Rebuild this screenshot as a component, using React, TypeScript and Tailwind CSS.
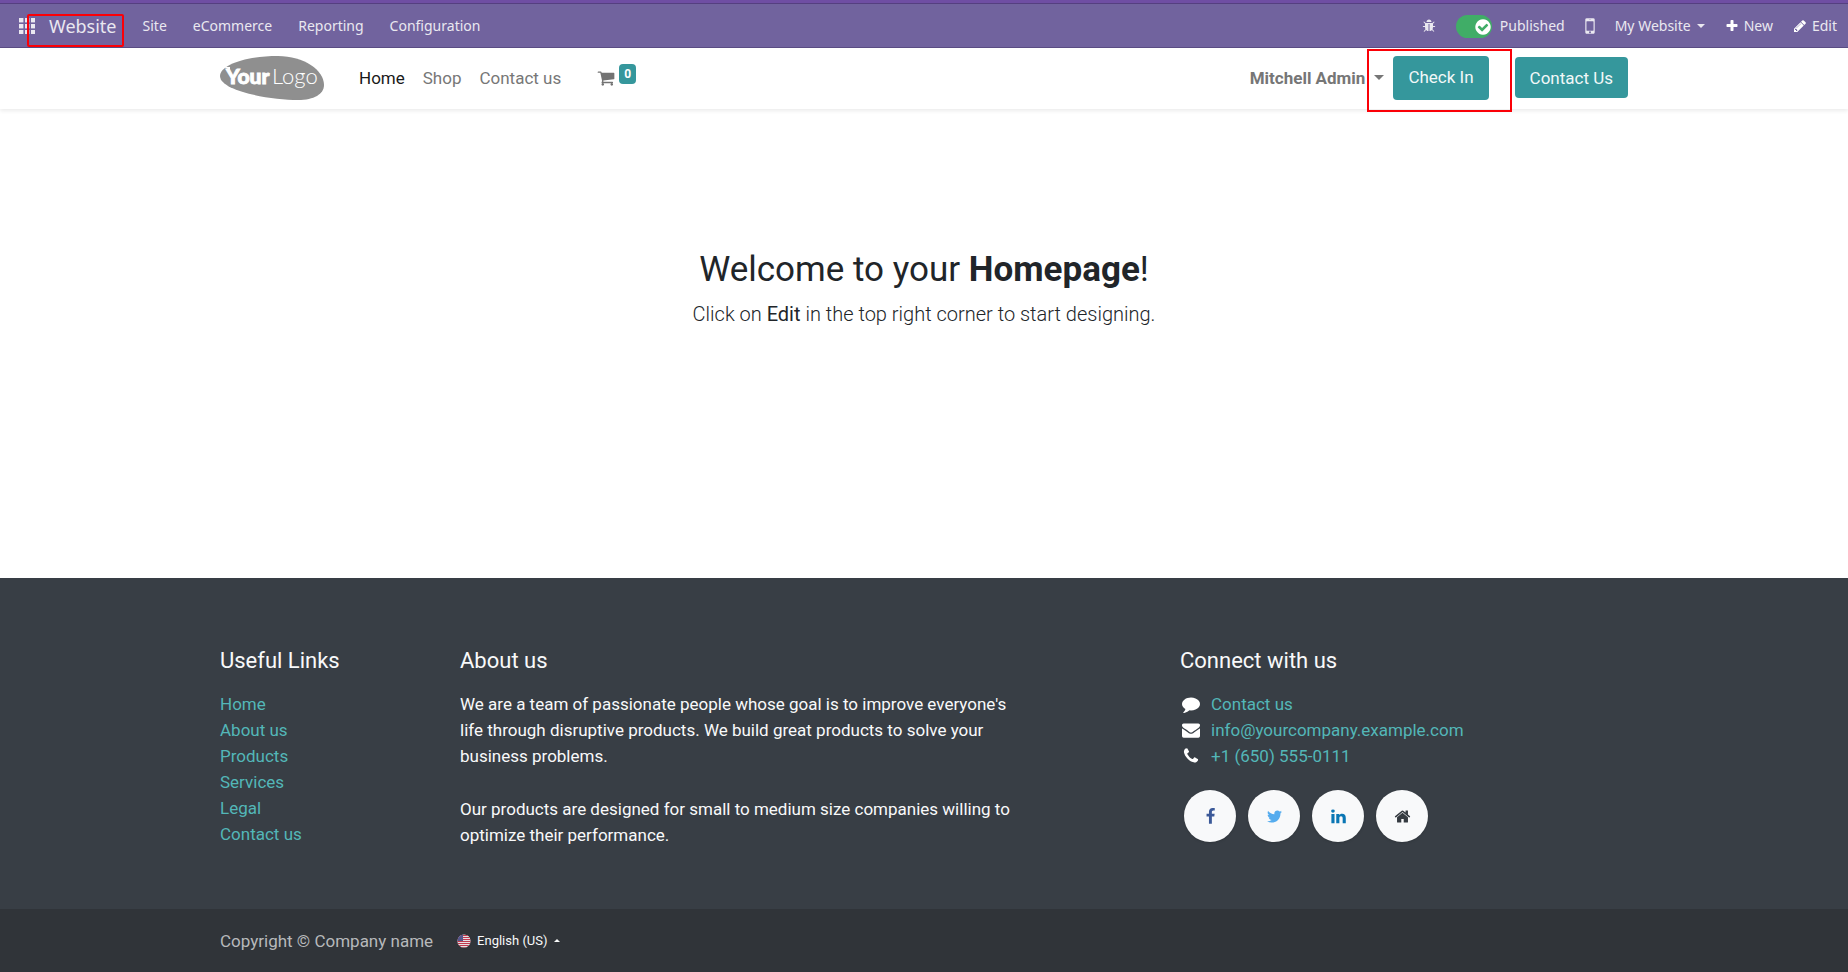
import React from "react";

const ICONS = {
  bug: "M1696 960q0 26-19 45t-45 19h-224q0 171-67 290l208 209q19 19 19 45t-19 45q-18 19-45 19t-45-19l-198-197q-5 5-15 13t-42 28.5-65 36.5-82 29-97 13v-896h-128v896q-51 0-101.5-13.5t-87-33-66-39-43.5-32.5l-15-14-183 207q-20 21-48 21-24 0-43-16-19-18-20.5-44.5t15.5-46.5l202-227q-58-114-58-274h-224q-26 0-45-19t-19-45 19-45 45-19h224v-294l-173-173q-19-19-19-45t19-45 45-19 45 19l173 173h844l173-173q19-19 45-19t45 19 19 45-19 45l-173 173v294h224q26 0 45 19t19 45zm-480-576h-640q0-133 93.5-226.5t226.5-93.5 226.5 93.5 93.5 226.5z",
  check: "M1412 734q0-28-18-46l-91-90q-19-19-45-19t-45 19l-408 407-226-226q-19-19-45-19t-45 19l-91 90q-18 18-18 46 0 27 18 45l362 362q19 19 45 19 27 0 46-19l543-543q18-18 18-45zm252 162q0 209-103 385.5t-279.5 279.5-385.5 103-385.5-103-279.5-279.5-103-385.5 103-385.5 279.5-279.5 385.5-103 385.5 103 279.5 279.5 103 385.5z",
  mobile: "M976 1408q0-33-23.5-56.5t-56.5-23.5-56.5 23.5-23.5 56.5 23.5 56.5 56.5 23.5 56.5-23.5 23.5-56.5zm208-160v-704q0-13-9.5-22.5t-22.5-9.5h-512q-13 0-22.5 9.5t-9.5 22.5v704q0 13 9.5 22.5t22.5 9.5h512q13 0 22.5-9.5t9.5-22.5zm-192-848q0-16-16-16h-160q-16 0-16 16t16 16h160q16 0 16-16zm288-16v1024q0 52-38 90t-90 38h-512q-52 0-90-38t-38-90v-1024q0-52 38-90t90-38h512q52 0 90 38t38 90z",
  plus: "M1600 736v192q0 40-28 68t-68 28h-416v416q0 40-28 68t-68 28h-192q-40 0-68-28t-28-68v-416h-416q-40 0-68-28t-28-68v-192q0-40 28-68t68-28h416v-416q0-40 28-68t68-28h192q40 0 68 28t28 68v416h416q40 0 68 28t28 68z",
  pencil: "M491 1536l91-91-235-235-91 91v107h128v128h107zm523-928q0-22-22-22-10 0-17 7l-542 542q-7 7-7 17 0 22 22 22 10 0 17-7l542-542q7-7 7-17zm-54-192l416 416-832 832h-416v-416zm683 96q0 53-37 90l-166 166-416-416 166-165q36-38 90-38 53 0 91 38l235 234q37 39 37 91z",
  cart: "M704 1536q0 52-38 90t-90 38-90-38-38-90 38-90 90-38 90 38 38 90zm896 0q0 52-38 90t-90 38-90-38-38-90 38-90 90-38 90 38 38 90zm128-1088v512q0 24-16.5 42.5t-40.5 21.5l-1044 122q13 60 13 70 0 16-24 64h920q26 0 45 19t19 45-19 45-45 19h-1024q-26 0-45-19t-19-45q0-11 8-31.5t16-36 21.5-40 15.5-29.5l-177-823h-204q-26 0-45-19t-19-45 19-45 45-19h256q16 0 28.5 6.5t19.5 15.5 13 24.5 8 26 5.5 29.5 4.5 26h1201q26 0 45 19t19 45z",
  comment: "M1792 896q0 174-120 321.5t-326 233-450 85.5q-70 0-145-8-198 175-460 242-49 14-114 22-17 2-30.5-9t-17.5-29v-1q-3-4-.5-12t2-10 4.5-9.5l6-9 7-8.5 8-9q7-8 31-34.5t34.5-38 31-39.5 32.5-51 27-59 26-76q-157-89-247.5-220t-90.5-281q0-130 71-248.5t191-204.5 286-136.5 348-50.5q244 0 450 85.5t326 233 120 321.5z",
  envelope: "M1792 710v794q0 66-47 113t-113 47h-1472q-66 0-113-47t-47-113v-794q44 49 101 87 362 246 497 345 57 42 92.5 65.5t94.5 48 110 24.5h2q51 0 110-24.5t94.5-48 92.5-65.5q170-123 498-345 57-39 100-87zm0-294q0 79-49 151t-122 123q-376 261-468 325-10 7-42.5 31t-54 38.5-52 32.5-57.5 27-50 9h-2q-23 0-50-9t-57.5-27-52-32.5-54-38.5-42.5-31q-91-64-262-182.5t-205-142.5q-62-42-117-115.5t-55-136.5q0-78 41.5-130t118.5-52h1472q65 0 112.5 47t47.5 113z",
  phone: "M1600 1240q0 27-10 70.5t-21 68.5q-21 50-122 106-94 51-186 51-27 0-53-3.5t-57.5-12.5-47-14.5-55.5-20.5-49-18q-98-35-175-83-127-79-264-216t-216-264q-48-77-83-175-3-9-18-49t-20.5-55.5-14.5-47-12.5-57.5-3.5-53q0-92 51-186 56-101 106-122 25-11 68.5-21t70.5-10q14 0 21 3 18 6 53 76 11 19 30 54t35 63.5 31 53.5q3 4 17.5 25t21.5 35.5 7 28.5q0 20-28.5 50t-62 55-62 53-28.5 46q0 9 5 22.5t8.5 20.5 14 24 11.5 19q76 137 174 235t235 174q2 1 19 11.5t24 14 20.5 8.5 22.5 5q18 0 46-28.5t53-62 55-62 50-28.5q14 0 28.5 7t35.5 21.5 25 17.5q25 15 53.5 31t63.5 35 54 30q70 35 76 53 3 7 3 21z",
  facebook: "M1343 12v264h-157q-86 0-116 36t-30 108v189h293l-39 296h-254v759h-306v-759h-255v-296h255v-218q0-186 104-288.5t277-102.5q147 0 228 12z",
  twitter: "M1684 408q-67 98-162 167 1 14 1 42 0 130-38 259.5t-115.5 248.5-184.5 210.5-258 146-323 54.5q-271 0-496-145 35 4 78 4 225 0 401-138-105-2-188-64.5t-114-159.5q33 5 61 5 43 0 85-11-112-23-185.5-111.5t-73.5-205.5v-4q68 38 146 41-66-44-105-115t-39-154q0-88 44-163 121 149 294.5 238.5t371.5 99.5q-8-38-8-74 0-134 94.5-228.5t228.5-94.5q140 0 236 102 109-21 205-78-37 115-142 178 93-10 186-50z",
  linkedin: "M477 625v991h-330v-991h330zm21-306q1 73-50.5 122t-135.5 49h-2q-82 0-132-49t-50-122q0-74 51.5-122.5t134.5-48.5 133 48.5 51 122.5zm1166 729v568h-329v-530q0-105-40.5-164.5t-126.5-59.5q-63 0-105.5 34.5t-63.5 85.5q-11 30-11 81v553h-329q2-399 2-647t-1-296l-1-48h329v144h-2q20-32 41-56t56.5-52 87-43.5 114.5-15.5q171 0 275 113.5t104 332.5z",
  home: "M1472 992v480q0 26-19 45t-45 19h-384v-384h-256v384h-384q-26 0-45-19t-19-45v-480q0-1 .5-3t.5-3l575-474 575 474q1 2 1 6zm223-69l-62 74q-8 9-21 11h-3q-13 0-21-7l-692-577-692 577q-12 8-24 7-13-2-21-11l-62-74q-8-10-7-23.5t11-21.5l719-599q32-26 76-26t76 26l244 204v-195q0-14 9-23t23-9h192q14 0 23 9t9 23v408l219 182q10 8 11 21.5t-7 23.5z",
};

function Icon({ name, className }: { name: keyof typeof ICONS; className: string }) {
  return (
    <svg viewBox="0 0 1792 1792" className={`shrink-0 fill-current ${className}`} aria-hidden="true">
      <path d={ICONS[name]} />
    </svg>
  );
}

function Caret({ up = false, className }: { up?: boolean; className: string }) {
  return (
    <svg viewBox="0 0 10 5" className={`shrink-0 fill-current ${className}`} aria-hidden="true">
      <path d={up ? "M0 5h10L5 0z" : "M0 0h10L5 5z"} />
    </svg>
  );
}

function Logo() {
  return (
    <svg viewBox="0 0 104 44" className="h-11 w-[104px]" role="img" aria-label="Your Logo">
      <path fill="#8f8f8f" d="M0 20C0 9 26 0 58 0c26 0 46 14 46 29 0 9-10 15-26 15C50 44 0 35 0 20z" />
      <path fill="#fff" d="M4 11h6v3z" />
      <text x="6" y="28" fill="#fff" stroke="#fff" strokeWidth="0.9" fontFamily="Lato, sans-serif" fontWeight="900" fontSize="21">Your</text>
      <text x="52" y="28" fill="#fff" fontFamily="Lato, sans-serif" fontWeight="300" fontSize="22">Logo</text>
    </svg>
  );
}

function Flag() {
  return (
    <svg viewBox="0 0 14 14" className="size-[14px]" aria-hidden="true">
      <defs>
        <clipPath id="flag-round"><circle cx="7" cy="7" r="6.6" /></clipPath>
      </defs>
      <g clipPath="url(#flag-round)">
        <rect width="14" height="14" fill="#e8dfe4" />
        {[1, 3, 5, 7, 9, 11, 13].map((y) => (
          <rect key={y} y={y} width="14" height="1" fill="#c0394e" />
        ))}
        <rect width="6" height="7" fill="#55578c" />
      </g>
    </svg>
  );
}

const menus = ["Site", "eCommerce", "Reporting", "Configuration"];
const usefulLinks = ["Home", "About us", "Products", "Services", "Legal", "Contact us"];

export default function App() {
  return (
    <div className="flex min-h-screen flex-col bg-white font-['Roboto',sans-serif] text-[17px] leading-[26px] text-[#212529]">
      <nav className="flex h-12 items-center justify-between border-t-3 border-b border-t-[#6f4ea3] border-b-[#5b4d85] bg-[#71639e] pt-0.5 pr-[11px] pl-[19px] font-['Noto_Sans',sans-serif] text-[14px] text-[#eae8f0] shadow-[inset_0_1px_0_#553f80]">
        <div className="flex items-center gap-[26px]">
          <div className="relative flex items-center gap-[14px]">
            <button type="button" aria-label="Apps">
              <svg viewBox="0 0 16 16" className="size-4 fill-current" aria-hidden="true">
                {[0, 6, 12].map((y) => [0, 6, 12].map((x) => <rect key={`${x}-${y}`} x={x} y={y} width="4.4" height="4.4" />))}
              </svg>
            </button>
            <a href="#website" className="text-[18px]">Website</a>
            <span className="pointer-events-none absolute top-px -right-[7px] -bottom-2 left-2 rounded-xs border-2 border-[#fb0007]" />
          </div>
          {menus.map((m) => (
            <button key={m} type="button">{m}</button>
          ))}
        </div>
        <div className="flex items-center gap-5">
          <button type="button" aria-label="Debug"><Icon name="bug" className="size-[14px]" /></button>
          <label className="flex items-center gap-2">
            <span className="relative flex">
              <input type="checkbox" defaultChecked className="h-[23px] w-9 appearance-none rounded-full bg-[#40ad67]" />
              <Icon name="check" className="pointer-events-none absolute top-[3px] right-0 size-[18px] text-white" />
            </span>
            Published
          </label>
          <button type="button" aria-label="Mobile preview" className="w-[10px]"><Icon name="mobile" className="-mx-[6px] size-[22px]" /></button>
          <button type="button" className="flex items-center gap-[6px]">My Website <Caret className="h-1 w-2" /></button>
          <button type="button" className="flex items-center gap-[5px]"><Icon name="plus" className="size-[14px] text-white" /> New</button>
          <button type="button" className="flex items-center gap-[5px]"><Icon name="pencil" className="size-[14px] text-white" /> Edit</button>
        </div>
      </nav>

      <header className="bg-white shadow-[0_2px_4px_rgba(0,0,0,0.08)]">
        <div className="mx-auto flex h-[61px] max-w-[1440px] items-center justify-between px-4 pb-0.5">
          <div className="flex items-center">
            <a href="#home"><Logo /></a>
            <nav className="ml-[35px] flex items-center gap-[18px] text-[#777]">
              <a href="#home" className="text-[#191919]">Home</a>
              <a href="#shop">Shop</a>
              <a href="#contact">Contact us</a>
            </nav>
            <a href="#cart" aria-label="Cart" className="ml-9 flex items-center gap-1 text-[#737373]">
              <Icon name="cart" className="size-[18px]" />
              <span className="mb-2 flex h-5 w-[17px] items-center justify-center rounded-[4px] bg-[#35979c] text-[12px] font-bold text-white">0</span>
            </a>
          </div>
          <div className="flex items-center">
            <button type="button" className="font-bold text-[#767676]">Mitchell Admin</button>
            <div className="relative ml-[9px] flex items-center gap-[9px] pr-[26px]">
              <Caret className="h-[5px] w-[10px] text-[#767676]" />
              <button type="button" className="h-11 rounded-[4px] bg-[#35979c] px-[15px] pb-0.5 text-[#f2f8f8]">Check In</button>
              <span className="pointer-events-none absolute -top-[7px] right-[3px] -bottom-3 -left-[7px] border-2 border-[#fb0007]" />
            </div>
            <a href="#contact" className="flex h-[41px] items-center rounded-[4px] bg-[#35979c] px-[15px] text-[#f2f8f8]">Contact Us</a>
          </div>
        </div>
      </header>

      <main className="grow pt-[140px] text-center">
        <h1 className="text-[35px] leading-[42px]">Welcome to your <b>Homepage</b>!</h1>
        <p className="mt-[7px] text-[20px] leading-[32px] font-light">Click on <b className="font-normal">Edit</b> in the top right corner to start designing.</p>
      </main>

      <footer className="bg-[#383e45] text-[#f8f9fa]">
        <div className="mx-auto grid max-w-[1440px] grid-cols-12 pt-[70px] pb-[61px]">
          <section className="col-span-2 px-4">
            <h2 className="mb-[17px] text-[22px]">Useful Links</h2>
            <ul className="text-[#53b7b8]">
              {usefulLinks.map((l) => (
                <li key={l}><a href="#link">{l}</a></li>
              ))}
            </ul>
          </section>
          <section className="col-span-5 px-4">
            <h2 className="mb-[17px] text-[22px]">About us</h2>
            <p>We are a team of passionate people whose goal is to improve everyone's<br />life through disruptive products. We build great products to solve your<br />business problems.</p>
            <p className="mt-[27px]">Our products are designed for small to medium size companies willing to<br />optimize their performance.</p>
          </section>
          <section className="col-span-4 col-start-9 px-4">
            <h2 className="mb-[17px] text-[22px]">Connect with us</h2>
            <ul className="text-[#53b7b8]">
              <li className="flex items-center gap-[11px]"><Icon name="comment" className="ml-0.5 size-[18px] text-white" /><a href="#contact">Contact us</a></li>
              <li className="flex items-center gap-[11px]"><Icon name="envelope" className="ml-0.5 size-[18px] text-white" /><a href="mailto:info@yourcompany.example.com">info@yourcompany.example.com</a></li>
              <li className="flex items-center gap-[11px]"><Icon name="phone" className="ml-0.5 size-[18px] text-white" /><a href="tel:+16505550111">+1 (650) 555-0111</a></li>
            </ul>
            <div className="mt-[21px] ml-1 flex gap-3">
              <a href="#facebook" aria-label="Facebook" className="flex size-[52px] items-center justify-center rounded-full bg-[#f8f9fa] text-[#3b5998] shadow-sm"><Icon name="facebook" className="size-[17px]" /></a>
              <a href="#twitter" aria-label="Twitter" className="flex size-[52px] items-center justify-center rounded-full bg-[#f8f9fa] text-[#55acee] shadow-sm"><Icon name="twitter" className="size-[17px]" /></a>
              <a href="#linkedin" aria-label="LinkedIn" className="flex size-[52px] items-center justify-center rounded-full bg-[#f8f9fa] text-[#0976b4] shadow-sm"><Icon name="linkedin" className="size-[17px]" /></a>
              <a href="#home" aria-label="Homepage" className="flex size-[52px] items-center justify-center rounded-full bg-[#f8f9fa] text-[#343a40] shadow-sm"><Icon name="home" className="size-[17px]" /></a>
            </div>
          </section>
        </div>
        <div className="bg-[#303439]">
          <div className="mx-auto flex h-[63px] max-w-[1440px] items-center gap-6 px-4">
            <span className="text-[#b7b9bb]">Copyright © Company name</span>
            <button type="button" className="flex items-center gap-[6px] text-[13px] text-[#f8f9fa]">
              <Flag /> English (US) <Caret up className="h-[3px] w-[6px]" />
            </button>
          </div>
        </div>
      </footer>
    </div>
  );
}
